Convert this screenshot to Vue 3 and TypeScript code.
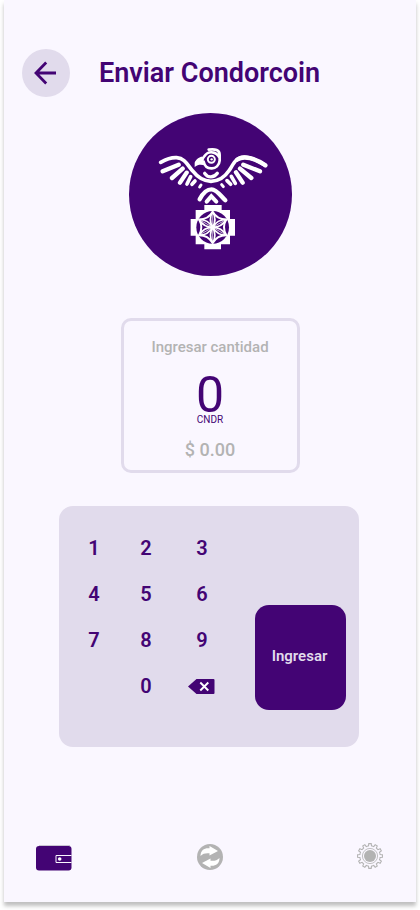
<script setup lang="ts">
import { computed, ref } from 'vue'

const digits = ['1', '2', '3', '4', '5', '6', '7', '8', '9', '0']
const amount = ref<string>('0')
const rate = 1

const fiat = computed<string>(() => '$ ' + (Number(amount.value) * rate).toFixed(2))

function press(digit: string): void {
  if (amount.value.length >= 5) return
  amount.value = amount.value === '0' ? digit : amount.value + digit
}

function erase(): void {
  amount.value = amount.value.slice(0, -1) || '0'
}

const spokes = [0, 60, 120, 180, 240, 300]
const teeth = [0, 30, 60, 90, 120, 150, 180, 210, 240, 270, 300, 330]
</script>

<template>
  <div class="screen">
    <header class="top">
      <button class="back" type="button" aria-label="Volver">
        <svg width="24" height="24" viewBox="0 0 24 24" aria-hidden="true">
          <path d="M22 12H2.500M12.200 1.500L2 12l10.200 10.500" fill="none" stroke="currentColor" stroke-width="2.800" />
        </svg>
      </button>
      <h1 class="title">Enviar Condorcoin</h1>
    </header>

    <main class="content">
      <svg class="logo" viewBox="0 0 163 163" aria-hidden="true">
        <circle cx="81.500" cy="81.500" r="81.500" fill="#430474" />
        <g transform="translate(21 22) scale(.3333)" fill="none" stroke="#fff" stroke-linecap="round">
          <path d="M32 82C50 72 66 67 80 68C106 70 112 90 128 108C142 126 158 139 183 139C210 139 226 124 238 106C252 84 258 67 282 66C306 66 322 78 346 91" stroke-width="11" />
          <path d="M262 74C280 60 318 70 346 91" stroke-width="13" />
          <path d="M86 89L38 109M98 101L66 129M110 113L90 143M280 89L330 109M270 101L304 129M258 112L278 143" stroke-width="13" />
          <path d="M122 125L111 147M135 138L126 148M244 124L256 145M231 137L242 148" stroke-width="11" />
          <path d="M153 150L149 156M215 149L220 155" stroke-width="9" />
          <path d="M161 80C164 94 173 100 184 100C197 101 208 91 209 77V60C209 45 196 41 176 44M163 64C170 53 180 51 187 52C197 53 203 58 208 67" stroke-width="8" />
          <circle cx="184" cy="73" r="10.500" stroke-width="6" />
          <circle cx="185" cy="73" r="3.500" fill="#fff" stroke="none" />
          <path d="M166 64C150 63 137 74 134 83V96C145 87 154 89 166 91L160 77Z" fill="#fff" stroke="none" />
          <path d="M164 115C173 129 192 129 202 115" stroke-width="10" />
          <path d="M149 193C162 168 172 163 185 163C199 163 210 180 226 196" stroke-width="13" />
          <path d="M170 200L184 184L199 200" stroke-width="12" />
        </g>
        <g transform="translate(46 82) scale(.3333)">
          <path d="M88 30H140V45H165V72H180V122H165V148H138V163H88V148H62V122H47V72H62V45H88Z" fill="#fff" />
          <circle cx="113" cy="97" r="49" fill="#430474" />
          <g v-for="a in spokes" :key="a" :transform="`rotate(${a} 113 97)`" fill="none" stroke="#fff">
            <path d="M113 97A47 47 0 0 1 113 50A47 47 0 0 1 113 97" stroke-width="5" />
            <path d="M113 97V50" stroke-width="2" />
            <path d="M113 50A47 47 0 0 0 153.700 73.500" stroke-width="6" />
          </g>
        </g>
      </svg>

      <section class="card">
        <label class="caption" for="amount">Ingresar cantidad</label>
        <output id="amount" class="amount">{{ amount }}</output>
        <span class="unit">CNDR</span>
        <span class="fiat">{{ fiat }}</span>
      </section>

      <section class="pad" aria-label="Teclado">
        <div class="keys">
          <button
            v-for="d in digits"
            :key="d"
            class="key"
            :class="{ zero: d === '0' }"
            type="button"
            @click="press(d)"
          >{{ d }}</button>
          <button class="key" type="button" aria-label="Borrar" @click="erase">
            <svg width="28" height="16" viewBox="0 0 28 16" aria-hidden="true">
              <path d="M0 8.500L8.500 1H25.500Q26.500 1 26.500 2V15Q26.500 16 25.500 16H8.500Z" fill="currentColor" />
              <path d="M12.300 4.500L20.300 12.500M20.300 4.500L12.300 12.500" stroke="#fff" stroke-width="1.900" />
            </svg>
          </button>
        </div>
        <button class="submit" type="button">Ingresar</button>
      </section>
    </main>

    <nav class="nav">
      <a href="#billetera" aria-label="Billetera">
        <svg width="36" height="28" viewBox="0 0 36 28" aria-hidden="true">
          <path d="M3 2.500H34" stroke="#c9c5d2" stroke-width="1" />
          <rect x="0" y="3" width="35.500" height="24.500" rx="3" fill="#430474" />
          <path d="M35.500 12.500H20V19.500H35.500" fill="none" stroke="#faf7ff" stroke-width="1" />
          <circle cx="23.700" cy="16" r="1.800" fill="#fff" />
        </svg>
      </a>
      <a href="#intercambio" aria-label="Intercambiar">
        <svg width="26" height="26" viewBox="0 0 26 26" aria-hidden="true">
          <circle cx="13" cy="13" r="13" fill="#b3b3b3" />
          <path d="M3.500 12C3.500 6.500 7 4.200 11 4.200H12.500V2L21 7L12.500 11.500V9.300C8.500 9 6 9.500 3.500 12Z" fill="#fff" />
          <path d="M22.500 14C22.500 19.500 19 21.800 15 21.800H13.500V24L5 19L13.500 14.500V16.700C17.500 17 20 16.500 22.500 14Z" fill="#fff" />
        </svg>
      </a>
      <a class="settings" href="#ajustes" aria-label="Ajustes">
        <svg width="26" height="28" viewBox="0 0 26 28" aria-hidden="true">
          <g fill="none" stroke="#b3b3b3" stroke-width="1.100">
            <path
              v-for="a in teeth"
              :key="a"
              :transform="`rotate(${a} 13 13)`"
              d="M10.300 3.200L11.500 2.900L11.800 .6H14.200L14.500 2.900L15.700 3.200"
            />
            <circle cx="13" cy="13" r="7.600" stroke-width=".8" />
          </g>
          <circle cx="13" cy="13" r="6" fill="#b3b3b3" />
        </svg>
      </a>
    </nav>
  </div>
</template>

<style>
body {
  margin: 0;
  background: #fff;
}
</style>

<style scoped>
.screen {
  box-sizing: border-box;
  display: flex;
  flex-direction: column;
  min-height: calc(100vh - 8px);
  margin: 0 4px 8px;
  background: #faf7ff;
  box-shadow: 0 4px 4px rgba(0, 0, 0, 0.25);
  color: #430474;
  font-family: Roboto, "Liberation Sans", sans-serif;
}

button {
  padding: 0;
  border: 0;
  background: none;
  color: inherit;
  font: inherit;
  cursor: pointer;
}

svg {
  display: block;
}

.top {
  display: flex;
  align-items: center;
  gap: 29px;
  padding: 49px 18px 0;
}

.back {
  display: grid;
  place-items: center;
  flex: none;
  width: 48px;
  height: 48px;
  border-radius: 50%;
  background: #e1dbec;
}

.title {
  margin: 0;
  font-size: 27px;
  font-weight: 600;
  line-height: 32px;
}

.content {
  display: flex;
  flex-direction: column;
  align-items: center;
  flex: 1;
  padding-top: 16px;
}

.logo {
  width: 163px;
  height: 163px;
}

.card {
  box-sizing: border-box;
  display: flex;
  flex-direction: column;
  align-items: center;
  min-width: 179px;
  margin-top: 42px;
  padding: 16px 16px 8px;
  border: 3px solid #e1dbec;
  border-radius: 10px;
}

.caption {
  color: #b3b3b3;
  font-size: 15px;
  font-weight: 500;
  line-height: 20px;
}

.amount {
  margin-top: 19px;
  font-size: 50px;
  line-height: 38px;
}

.unit {
  font-size: 10px;
  line-height: 12px;
}

.fiat {
  margin-top: 12px;
  color: #b3b3b3;
  font-size: 18px;
  font-weight: 500;
  line-height: 24px;
}

.pad {
  box-sizing: border-box;
  display: flex;
  align-items: flex-end;
  align-self: stretch;
  justify-content: space-between;
  min-height: 241px;
  margin: 33px 57px 0 55px;
  padding: 19px 13px 37px 9px;
  border-radius: 14px;
  background: #e1dbec;
}

.keys {
  display: grid;
  grid-template-columns: 52px 52px 60px;
  grid-auto-rows: 46px;
  align-self: flex-start;
}

.key {
  display: grid;
  place-items: center;
  font-size: 20px;
  font-weight: 600;
}

.zero {
  grid-column: 2;
}

.submit {
  width: 91px;
  height: 105px;
  padding: 0 2px 4px 0;
  border-radius: 14px;
  background: #430474;
  color: #e1dbec;
  font-size: 15px;
  font-weight: 600;
}

.nav {
  display: grid;
  grid-template-columns: 1fr auto 1fr;
  align-items: center;
  padding: 24px 33px 31px 32px;
}

.settings {
  justify-self: end;
}
</style>
